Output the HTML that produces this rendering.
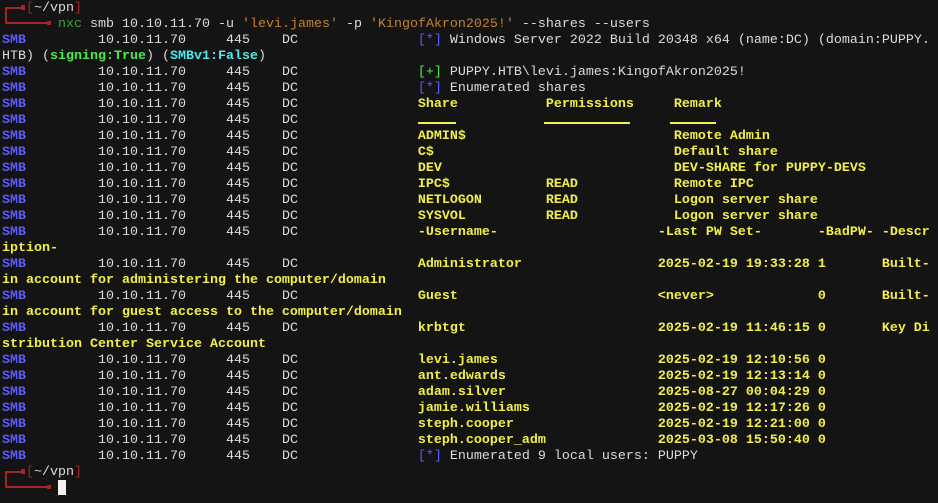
<!DOCTYPE html>
<html><head><meta charset="utf-8"><style>
html,body{margin:0;padding:0;background:#141414;width:938px;height:503px;overflow:hidden}
.t{position:absolute;left:2px;top:2px;font-family:"Liberation Mono",monospace;font-size:13.33px;color:#dcdcdc;white-space:pre}
.r{position:absolute;left:0;height:16px;line-height:16px}
.b{color:#5a5aff;font-weight:bold}
.y{color:#f2ef4a;font-weight:bold}
.g{color:#4fe84f;font-weight:bold}
.c{color:#50e8e8;font-weight:bold}
.bl{color:#5a5aff}
.gr{color:#4fe84f}
.n{color:#36a636}
.o{color:#c5822e}
.rd{color:#a82424}
.u{display:inline-block;border-bottom:2px solid #f2ef4a;height:9px;vertical-align:top}
.pl{position:absolute;background:#a82424}
.cur{position:absolute;background:#f0f0f0}
</style></head><body>
<div class="pl" style="left:5px;top:7px;width:2px;height:17px"></div>
<div class="pl" style="left:5px;top:7px;width:20px;height:2px"></div>
<div class="pl" style="left:21px;top:5px;width:4px;height:5px"></div>
<div class="pl" style="left:5px;top:22px;width:45px;height:2px"></div>
<div class="pl" style="left:47px;top:21px;width:4px;height:4px"></div>
<div class="pl" style="left:5px;top:471px;width:2px;height:17px"></div>
<div class="pl" style="left:5px;top:471px;width:20px;height:2px"></div>
<div class="pl" style="left:21px;top:469px;width:4px;height:5px"></div>
<div class="pl" style="left:5px;top:486px;width:45px;height:2px"></div>
<div class="pl" style="left:47px;top:485px;width:4px;height:4px"></div>
<div class="cur" style="left:58px;top:480px;width:8px;height:15px"></div>
<div class="t">
<div class="r" style="top:-1px">   <span class="rd">[</span>~/vpn<span class="rd">]</span></div>
<div class="r" style="top:15px">       <span class="n">nxc</span> smb 10.10.11.70 -u <span class="o">'levi.james'</span> -p <span class="o">'KingofAkron2025!'</span> --shares --users</div>
<div class="r" style="top:31px"><span class="b">SMB</span>         10.10.11.70     445    DC               <span class="bl">[*]</span> Windows Server 2022 Build 20348 x64 (name:DC) (domain:PUPPY.</div>
<div class="r" style="top:47px">HTB) (<span class="g">signing:True</span>) (<span class="c">SMBv1:False</span>)</div>
<div class="r" style="top:63px"><span class="b">SMB</span>         10.10.11.70     445    DC               <span class="gr">[+]</span> PUPPY.HTB\levi.james:KingofAkron2025!</div>
<div class="r" style="top:79px"><span class="b">SMB</span>         10.10.11.70     445    DC               <span class="bl">[*]</span> Enumerated shares</div>
<div class="r" style="top:95px"><span class="b">SMB</span>         10.10.11.70     445    DC               <span class="y">Share           Permissions     Remark</span></div>
<div class="r" style="top:111px"><span class="b">SMB</span>         10.10.11.70     445    DC               <span class="u" style="width:38px"></span>           <span class="u" style="width:86px"></span>     <span class="u" style="width:46px"></span></div>
<div class="r" style="top:127px"><span class="b">SMB</span>         10.10.11.70     445    DC               <span class="y">ADMIN$                          Remote Admin</span></div>
<div class="r" style="top:143px"><span class="b">SMB</span>         10.10.11.70     445    DC               <span class="y">C$                              Default share</span></div>
<div class="r" style="top:159px"><span class="b">SMB</span>         10.10.11.70     445    DC               <span class="y">DEV                             DEV-SHARE for PUPPY-DEVS</span></div>
<div class="r" style="top:175px"><span class="b">SMB</span>         10.10.11.70     445    DC               <span class="y">IPC$            READ            Remote IPC</span></div>
<div class="r" style="top:191px"><span class="b">SMB</span>         10.10.11.70     445    DC               <span class="y">NETLOGON        READ            Logon server share</span></div>
<div class="r" style="top:207px"><span class="b">SMB</span>         10.10.11.70     445    DC               <span class="y">SYSVOL          READ            Logon server share</span></div>
<div class="r" style="top:223px"><span class="b">SMB</span>         10.10.11.70     445    DC               <span class="y">-Username-                    -Last PW Set-       -BadPW- -Descr</span></div>
<div class="r" style="top:239px"><span class="y">iption-</span></div>
<div class="r" style="top:255px"><span class="b">SMB</span>         10.10.11.70     445    DC               <span class="y">Administrator                 2025-02-19 19:33:28 1       Built-</span></div>
<div class="r" style="top:271px"><span class="y">in account for administering the computer/domain</span></div>
<div class="r" style="top:287px"><span class="b">SMB</span>         10.10.11.70     445    DC               <span class="y">Guest                         &lt;never&gt;             0       Built-</span></div>
<div class="r" style="top:303px"><span class="y">in account for guest access to the computer/domain</span></div>
<div class="r" style="top:319px"><span class="b">SMB</span>         10.10.11.70     445    DC               <span class="y">krbtgt                        2025-02-19 11:46:15 0       Key Di</span></div>
<div class="r" style="top:335px"><span class="y">stribution Center Service Account</span></div>
<div class="r" style="top:351px"><span class="b">SMB</span>         10.10.11.70     445    DC               <span class="y">levi.james                    2025-02-19 12:10:56 0</span></div>
<div class="r" style="top:367px"><span class="b">SMB</span>         10.10.11.70     445    DC               <span class="y">ant.edwards                   2025-02-19 12:13:14 0</span></div>
<div class="r" style="top:383px"><span class="b">SMB</span>         10.10.11.70     445    DC               <span class="y">adam.silver                   2025-08-27 00:04:29 0</span></div>
<div class="r" style="top:399px"><span class="b">SMB</span>         10.10.11.70     445    DC               <span class="y">jamie.williams                2025-02-19 12:17:26 0</span></div>
<div class="r" style="top:415px"><span class="b">SMB</span>         10.10.11.70     445    DC               <span class="y">steph.cooper                  2025-02-19 12:21:00 0</span></div>
<div class="r" style="top:431px"><span class="b">SMB</span>         10.10.11.70     445    DC               <span class="y">steph.cooper_adm              2025-03-08 15:50:40 0</span></div>
<div class="r" style="top:447px"><span class="b">SMB</span>         10.10.11.70     445    DC               <span class="bl">[*]</span> Enumerated 9 local users: PUPPY</div>
<div class="r" style="top:463px">   <span class="rd">[</span>~/vpn<span class="rd">]</span></div>
</div>
</body></html>
